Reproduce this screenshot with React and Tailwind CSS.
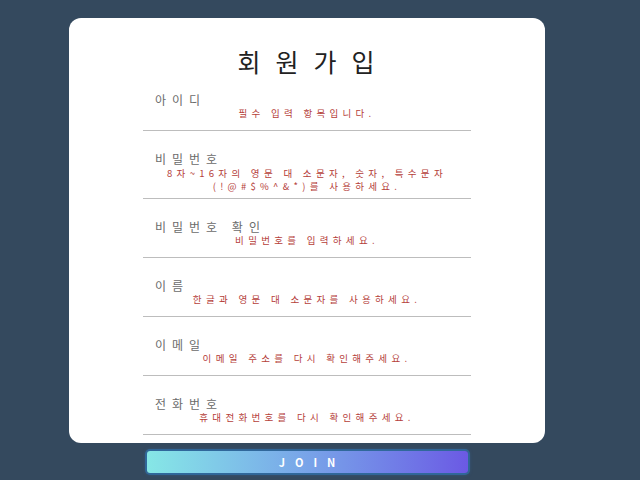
import React from 'react';

const fields = [
  { label: '아이디', msg: ['필수 입력 항목입니다.'] },
  { label: '비밀번호', msg: ['8자~16자의 영문 대 소문자, 숫자, 특수문자', '(!@#$%^&*)를 사용하세요.'] },
  { label: '비밀번호 확인', msg: ['비밀번호를 입력하세요.'] },
  { label: '이름', msg: ['한글과 영문 대 소문자를 사용하세요.'] },
  { label: '이메일', msg: ['이메일 주소를 다시 확인해주세요.'] },
  { label: '전화번호', msg: ['휴대전화번호를 다시 확인해주세요.'] },
];

const Field = ({ label, msg }) => {
  const multi = msg.length > 1;
  return (
    <div className={`pt-[22px] border-b border-[#bdbdbd] ${multi ? 'pb-[5px]' : 'pb-[11px]'}`}>
      <p className="pl-[12px] text-[12px] leading-[12px] tracking-[6px] text-[#6b6b6b]">{label}</p>
      <div
        className={`mt-[2px] text-center text-[9.5px] tracking-[4.3px] text-[#b5403a] ${
          multi ? 'leading-[13px]' : 'leading-[11px]'
        }`}
      >
        {msg.map((m) => (
          <p key={m}>{m}</p>
        ))}
      </div>
    </div>
  );
};

export default function App() {
  return (
    <div
      className="w-[640px] h-[480px] overflow-hidden bg-[#34495e] pl-[69px] pt-[18px]"
      style={{ fontFamily: '"Noto Sans CJK KR", "Noto Sans", sans-serif' }}
    >
      <div className="w-[476px]">
        {/* Card */}
        <div className="bg-white rounded-[12px] pt-[32px] pb-[8px] px-[74px]">
          <h1 className="h-[22px] leading-[22px] text-[25px] tracking-[15px] pl-[13px] text-center text-[#222]">
            회원가입
          </h1>
          {fields.map((f) => (
            <Field key={f.label} {...f} />
          ))}
        </div>

        {/* Join button */}
        <div className="flex justify-center mt-[8px]">
          <button className="w-[321px] h-[22px] rounded-[3px] bg-gradient-to-r from-[#86e7e6] to-[#6b59e4] ring-2 ring-[#2f6fa8]/70 shadow-[0_0_4px_rgba(60,140,220,0.6)] text-white text-[11px] font-bold tracking-[10px] pl-[10px] leading-[22px]">
            JOIN
          </button>
        </div>
      </div>
    </div>
  );
}
